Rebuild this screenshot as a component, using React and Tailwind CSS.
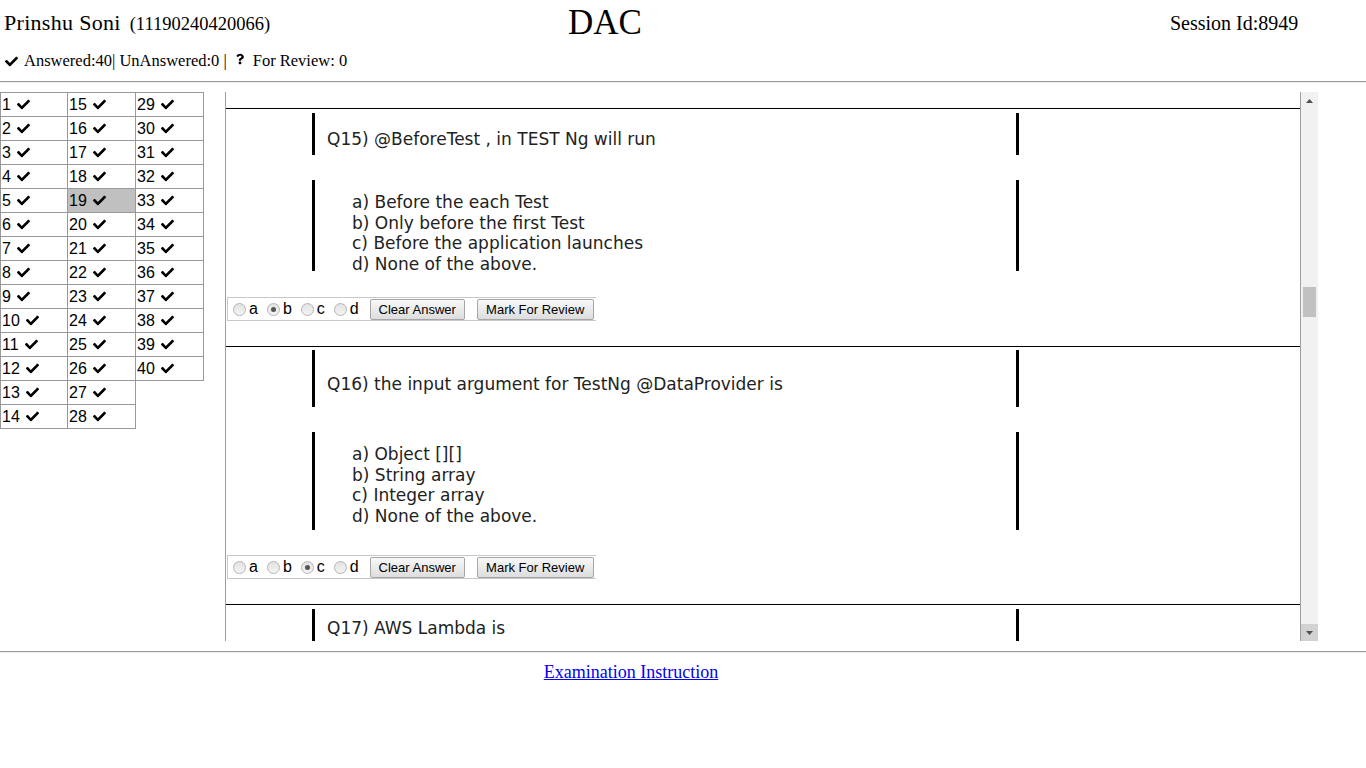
// App.jsx
// Online exam screen: question palette on the left, scrolled question list on the right
import React from 'react';
import { FaCheck, FaQuestion } from 'react-icons/fa';

const serif = { fontFamily: '"Liberation Serif", "Times New Roman", serif' };
const arial = { fontFamily: '"Liberation Sans", Arial, sans-serif' };
const verdana = { fontFamily: '"DejaVu Sans", Verdana, sans-serif' };

const columns = [
  Array.from({ length: 14 }, (_, i) => i + 1),
  Array.from({ length: 14 }, (_, i) => i + 15),
  Array.from({ length: 12 }, (_, i) => i + 29),
];

const questions = [
  {
    no: 15,
    text: '@BeforeTest , in TEST Ng will run',
    top: 4,
    qHeight: 42,
    qPad: 14,
    options: ['Before the each Test', 'Only before the first Test', 'Before the application launches', 'None of the above.'],
    oHeight: 91,
    gap: 26,
    answer: 'b',
  },
  {
    no: 16,
    text: 'the input argument for TestNg @DataProvider is',
    top: 3,
    qHeight: 57,
    qPad: 22,
    options: ['Object [][]', 'String array', 'Integer array', 'None of the above.'],
    oHeight: 98,
    gap: 25,
    answer: 'c',
  },
];

function PaletteCell({ n, first }) {
  const active = n === 19;
  return (
    <div
      className={
        'h-[25px] -mt-px border border-[#999] flex items-center pl-[1px] text-[16px] text-black ' +
        (first ? 'w-[68px] ' : 'w-[69px] -ml-px ') +
        (active ? 'bg-[#c0c0c0]' : 'bg-white')
      }
      style={arial}
    >
      <span>{n}</span>
      <FaCheck className="ml-[5px] w-[15px] h-[13px]" />
    </div>
  );
}

function Radio({ checked }) {
  return (
    <span className="w-[13px] h-[13px] rounded-full border border-[#b5b5b5] bg-linear-to-b from-[#e2e2e2] to-[#f4f4f4] flex items-center justify-center">
      {checked && <span className="w-[5px] h-[5px] rounded-full bg-[#555]" />}
    </span>
  );
}

function AnswerRow({ answer }) {
  return (
    <div
      className="ml-[1px] w-[369px] h-[24px] border-y border-l border-[#c8c8c8] flex items-center text-[16px] text-black"
      style={arial}
    >
      {['a', 'b', 'c', 'd'].map((l, i) => (
        <span key={l} className={'flex items-center ' + (i === 0 ? 'ml-[5px]' : 'ml-[9px]')}>
          <Radio checked={l === answer} />
          <span className="ml-[3px] leading-none">{l}</span>
        </span>
      ))}
      <button
        className="ml-[11px] w-[95px] h-[21px] border border-[#a6a6a6] rounded-[2px] bg-linear-to-b from-[#f8f8f8] to-[#dddddd] text-[13px] text-black"
        style={arial}
      >
        Clear Answer
      </button>
      <button
        className="ml-[12px] w-[117px] h-[21px] border border-[#a6a6a6] rounded-[2px] bg-linear-to-b from-[#f8f8f8] to-[#dddddd] text-[13px] text-black"
        style={arial}
      >
        Mark For Review
      </button>
    </div>
  );
}

function QuestionBlock({ q }) {
  return (
    <div className="border-t border-black pb-[25px]" style={{ paddingTop: q.top }}>
      <div
        className="ml-[86px] w-[707px] border-x-[3px] border-black text-[17px] text-[#222] pl-[12px]"
        style={{ ...verdana, height: q.qHeight, paddingTop: q.qPad }}
      >
        Q{q.no}) {q.text}
      </div>
      <div
        className="ml-[86px] mt-[25px] w-[707px] border-x-[3px] border-black text-[17px] text-[#222] pl-[37px] pt-[12px] leading-[20.6px]"
        style={{ ...verdana, height: q.oHeight }}
      >
        {q.options.map((o, i) => (
          <div key={i}>
            {'abcd'[i]}) {o}
          </div>
        ))}
      </div>
      <div style={{ marginTop: q.gap }}>
        <AnswerRow answer={q.answer} />
      </div>
    </div>
  );
}

function Arrow({ up }) {
  return (
    <svg width="7" height="4" viewBox="0 0 7 4">
      <path d={up ? 'M0 4 L3.5 0 L7 4 Z' : 'M0 0 L3.5 4 L7 0 Z'} fill="#505050" />
    </svg>
  );
}

export default function App() {
  return (
    <div className="w-[1366px] min-h-[768px] bg-white text-black">
      {/* header */}
      <div className="h-[81px] px-[4px]" style={serif}>
        <div className="h-[47px] grid grid-cols-[564px_602px_1fr] items-start">
          <div className="mt-[11px] flex items-baseline">
            <span className="text-[22px] leading-[24px] tracking-[0.3px]">Prinshu Soni</span>
            <span className="ml-[9px] text-[18.5px] leading-[24px]">(11190240420066)</span>
          </div>
          <div className="mt-[3px] text-[35px] leading-[40px]">DAC</div>
          <div className="mt-[11px] text-[20px] leading-[24px]">Session Id:8949</div>
        </div>
        <div className="mt-[4px] flex items-center text-[16.5px] leading-[20px]">
          <FaCheck className="w-[15px] h-[13px]" />
          <span className="ml-[5px]">Answered:40| UnAnswered:0 |</span>
          <FaQuestion className="ml-[9px] w-[8px] h-[12px] mb-[4px]" />
          <span className="ml-[9px]">For Review: 0</span>
        </div>
      </div>
      <div className="border-t border-[#9a9a9a] border-b border-b-[#eeeeee]" />

      {/* body */}
      <div className="mt-[9px] flex items-start">
        <div className="w-[225px] flex items-start pt-px">
          {columns.map((col, ci) => (
            <div key={ci} className="flex flex-col">
              {col.map((n) => (
                <PaletteCell key={n} n={n} first={ci === 0} />
              ))}
            </div>
          ))}
        </div>

        <div className="w-[1093px] h-[549px] border-l border-[#a0a0a0] flex">
          <div className="flex-1 overflow-hidden border-r border-[#a0a0a0]">
            <div className="h-[16px]" />
            {questions.map((q) => (
              <QuestionBlock key={q.no} q={q} />
            ))}
            <div className="border-t border-black pt-[4px]">
              <div
                className="ml-[86px] w-[707px] h-[42px] border-x-[3px] border-black text-[17px] leading-[22px] text-[#222] pl-[12px] pt-[8px]"
                style={verdana}
              >
                Q17) AWS Lambda is
              </div>
            </div>
          </div>
          <div className="w-[17px] bg-[#f1f1f1] flex flex-col">
            <div className="h-[17px] flex items-center justify-center">
              <Arrow up />
            </div>
            <div className="flex-1">
              <div className="mt-[178px] mx-[2px] h-[30px] bg-[#c1c1c1]" />
            </div>
            <div className="h-[17px] bg-[#d2d2d2] flex items-center justify-center">
              <Arrow />
            </div>
          </div>
        </div>
      </div>

      {/* footer */}
      <div className="mt-[10px] border-t border-[#9a9a9a] border-b border-b-[#eeeeee]" />
      <div className="mt-[8px] pr-[104px] text-center text-[18px] leading-[22px]" style={serif}>
        <a href="#" className="text-[#0000ee] underline">
          Examination Instruction
        </a>
      </div>
    </div>
  );
}
